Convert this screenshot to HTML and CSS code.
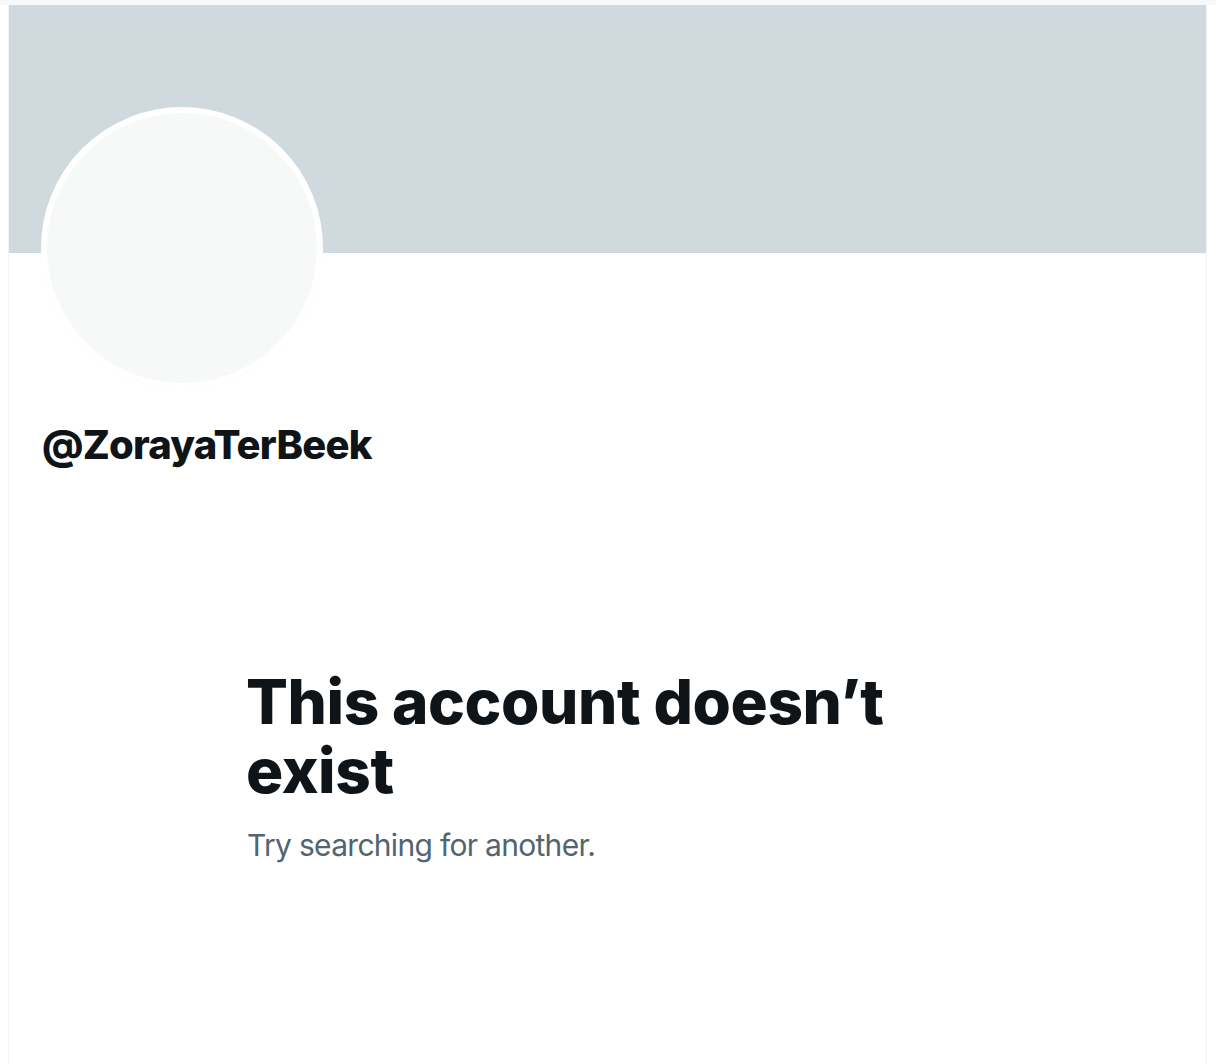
FILE: index.html
```html
<!DOCTYPE html>
<html lang="en">
<head>
<meta charset="utf-8">
<title>@ZorayaTerBeek</title>
<link rel="stylesheet" href="styles.css">
</head>
<body>
<div class="topstrip"></div>
<main class="profile">
  <div class="banner"></div>
  <div class="avatar-row">
    <div class="avatar"></div>
  </div>
  <div class="handle">@ZorayaTerBeek</div>
  <section class="empty">
    <h1 class="empty-title">This account doesn’t exist</h1>
    <p class="empty-sub">Try searching for another.</p>
  </section>
</main>
</body>
</html>
```
FILE: styles.css
```css
html, body {
  margin: 0;
  padding: 0;
  background: #ffffff;
}
body {
  font-family: Inter, "Noto Sans", "Liberation Sans", sans-serif;
  color: #0f1419;
  height: 1064px;
  overflow: hidden;
}
.topstrip {
  height: 5px;
  background: #f7f9f9;
}
.profile {
  margin-left: 8px;
  width: 1197px;
  height: 1059px;
  border-left: 1px solid #eff3f4;
  border-right: 1px solid #eff3f4;
  display: flex;
  flex-direction: column;
}
.banner {
  height: 248px;
  background: #cfd9de;
  flex: none;
}
.avatar-row {
  display: flex;
  padding-left: 32px;
  margin-top: -146px;
}
.avatar {
  width: 270px;
  height: 270px;
  border-radius: 50%;
  background: #f7f9f9;
  border: 6px solid #ffffff;
  box-shadow: 0 0 1px rgba(0,0,0,0.04);
}
.handle {
  margin-left: 33px;
  margin-top: 32px;
  font-size: 40px;
  line-height: 48px;
  font-weight: 800;
  letter-spacing: -0.8px;
}
.empty {
  margin-left: 237px;
  margin-top: 198px;
  width: 680px;
}
.empty-title {
  margin: 0;
  font-size: 62px;
  line-height: 69px;
  font-weight: 800;
  letter-spacing: -0.4px;
}
.empty-sub {
  margin: 20px 0 0 1px;
  font-size: 30px;
  line-height: 40px;
  font-weight: 400;
  letter-spacing: -0.7px;
  color: #536471;
}
```
